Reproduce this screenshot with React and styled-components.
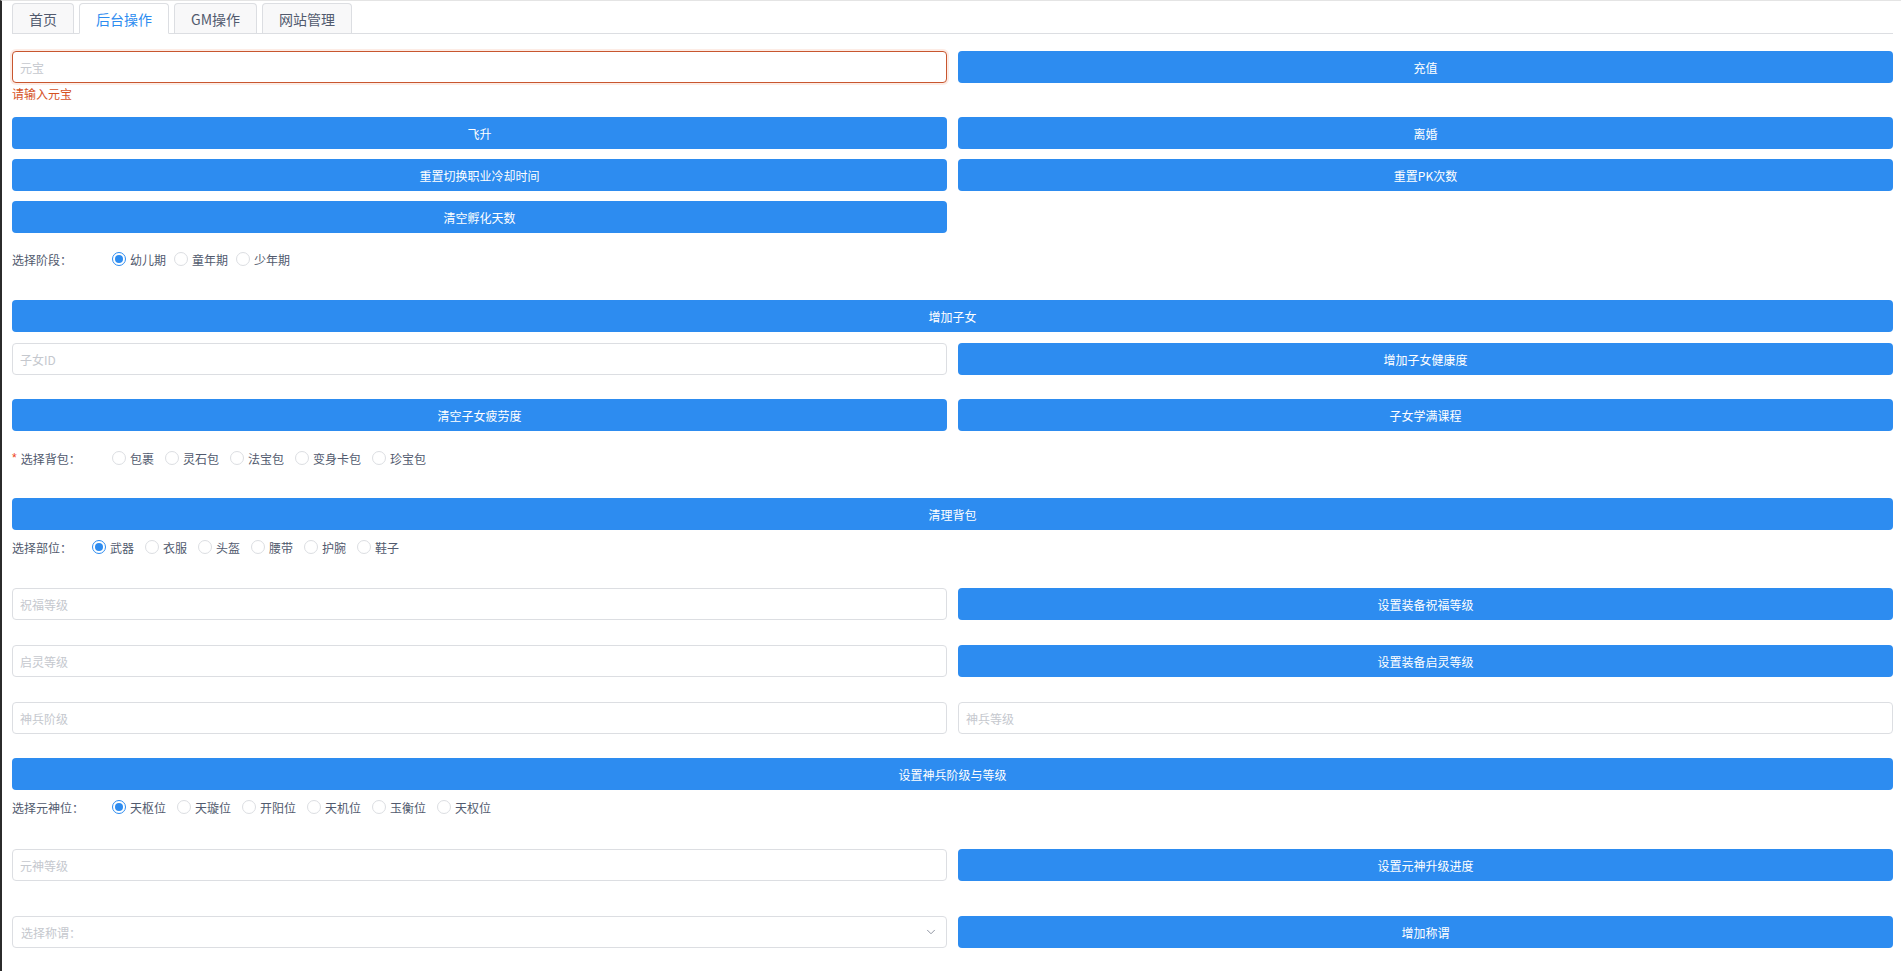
import React from 'react';
import styled, { createGlobalStyle } from 'styled-components';
import { ChevronDown } from 'lucide-react';

const Global = createGlobalStyle`
  html, body { margin: 0; padding: 0; background: #fff; }
  body {
    font-family: "Noto Sans CJK SC", "Noto Sans", "Liberation Sans", sans-serif;
    color: #515a6e;
  }
  * { box-sizing: border-box; }
`;

const Page = styled.div`
  min-height: 971px;
  border-left: 2px solid #2b2b2b;
  border-top: 1px solid #e4e4e4;
  padding: 2px 8px 0 10px;
`;

const TabBar = styled.div`
  display: flex;
  align-items: flex-end;
  gap: 5px;
  height: 31px;
  border-bottom: 1px solid #dcdee2;
`;

const Tab = styled.div`
  height: ${p => (p.$active ? '31px' : '30px')};
  margin-bottom: ${p => (p.$active ? '-1px' : '0')};
  padding: 0 16px;
  display: flex;
  align-items: center;
  font-size: 14px;
  color: ${p => (p.$active ? '#2d8cf0' : '#515a6e')};
  background: ${p => (p.$active ? '#fff' : '#f8f8f9')};
  border: 1px solid #dcdee2;
  border-bottom: ${p => (p.$active ? '1px solid #fff' : 'none')};
  border-radius: 4px 4px 0 0;
`;

const Row = styled.div`
  display: grid;
  grid-template-columns: ${p => (p.$full ? '1fr' : '1fr 1fr')};
  column-gap: 11px;
  align-items: start;
  margin-top: ${p => p.$mt}px;
`;

const Field = styled.div`
  display: flex;
  flex-direction: column;
`;

const Input = styled.input`
  height: 32px;
  width: 100%;
  border: 1px solid ${p => (p.$error ? '#c8562f' : '#dcdee2')};
  box-shadow: ${p => (p.$error ? '0 0 0 2px rgba(237, 100, 40, 0.12)' : 'none')};
  border-radius: 4px;
  padding: 0 7px;
  font-family: inherit;
  font-size: 12px;
  color: #515a6e;
  outline: none;
  background: #fff;
  &::placeholder { color: #c5c8ce; }
`;

const ErrorTip = styled.div`
  margin-top: 3px;
  font-size: 12px;
  line-height: 16px;
  color: #d5521f;
`;

const Button = styled.button`
  height: 32px;
  width: 100%;
  border: none;
  border-radius: 4px;
  background: #2d8cf0;
  color: #fff;
  font-family: inherit;
  font-size: 12px;
  cursor: pointer;
`;

const SelectBox = styled.div`
  height: 32px;
  border: 1px solid #dcdee2;
  border-radius: 4px;
  padding: 0 8px 0 8px;
  display: flex;
  align-items: center;
  justify-content: space-between;
  font-size: 12px;
  color: #c5c8ce;
  background: #fff;
`;

const RadioLine = styled.div`
  display: flex;
  align-items: center;
  height: 32px;
  margin-top: ${p => p.$mt}px;
  font-size: 12px;
`;

const RadioLabel = styled.div`
  width: ${p => p.$w}px;
  flex: none;
  color: #515a6e;
  display: flex;
  align-items: center;
`;

const Star = styled.span`
  color: #ed4014;
  margin-right: 4px;
  font-family: "Liberation Sans", sans-serif;
`;

const RadioItem = styled.label`
  display: flex;
  align-items: center;
  margin-right: ${p => p.$gap}px;
  color: #515a6e;
  cursor: pointer;
`;

const Circle = styled.span`
  width: 14px;
  height: 14px;
  border-radius: 50%;
  border: 1px solid ${p => (p.$checked ? '#2d8cf0' : '#dcdee2')};
  margin-right: 4px;
  display: flex;
  align-items: center;
  justify-content: center;
  background: #fff;
  &::after {
    content: '';
    width: 8px;
    height: 8px;
    border-radius: 50%;
    background: ${p => (p.$checked ? '#2d8cf0' : 'transparent')};
  }
`;

function RadioGroup({ label, width, required, options, mt, gap = 11 }) {
  return (
    <RadioLine $mt={mt}>
      <RadioLabel $w={width}>
        {required && <Star>*</Star>}
        {label}
      </RadioLabel>
      {options.map((o, i) => (
        <RadioItem key={o} $gap={gap}>
          <Circle $checked={i === 0 && !required} />
          {o}
        </RadioItem>
      ))}
    </RadioLine>
  );
}

export default function App() {
  return (
    <>
      <Global />
      <Page>
        <TabBar>
          <Tab>首页</Tab>
          <Tab $active>后台操作</Tab>
          <Tab>GM操作</Tab>
          <Tab>网站管理</Tab>
        </TabBar>

        <Row $mt={17}>
          <Field>
            <Input $error placeholder="元宝" />
            <ErrorTip>请输入元宝</ErrorTip>
          </Field>
          <Button>充值</Button>
        </Row>
        <Row $mt={15}>
          <Button>飞升</Button>
          <Button>离婚</Button>
        </Row>
        <Row $mt={10}>
          <Button>重置切换职业冷却时间</Button>
          <Button>重置PK次数</Button>
        </Row>
        <Row $mt={10}>
          <Button>清空孵化天数</Button>
          <div />
        </Row>

        <RadioGroup mt={10} gap={8} label="选择阶段：" width={100} options={['幼儿期', '童年期', '少年期']} />

        <Row $full $mt={25}>
          <Button>增加子女</Button>
        </Row>
        <Row $mt={11}>
          <Input placeholder="子女ID" />
          <Button>增加子女健康度</Button>
        </Row>
        <Row $mt={24}>
          <Button>清空子女疲劳度</Button>
          <Button>子女学满课程</Button>
        </Row>

        <RadioGroup mt={11} required label="选择背包：" width={100} options={['包裹', '灵石包', '法宝包', '变身卡包', '珍宝包']} />

        <Row $full $mt={24}>
          <Button>清理背包</Button>
        </Row>

        <RadioGroup mt={1} label="选择部位：" width={80} options={['武器', '衣服', '头盔', '腰带', '护腕', '鞋子']} />

        <Row $mt={25}>
          <Input placeholder="祝福等级" />
          <Button>设置装备祝福等级</Button>
        </Row>
        <Row $mt={25}>
          <Input placeholder="启灵等级" />
          <Button>设置装备启灵等级</Button>
        </Row>
        <Row $mt={25}>
          <Input placeholder="神兵阶级" />
          <Input placeholder="神兵等级" />
        </Row>
        <Row $full $mt={24}>
          <Button>设置神兵阶级与等级</Button>
        </Row>

        <RadioGroup mt={1} label="选择元神位：" width={100} options={['天枢位', '天璇位', '开阳位', '天机位', '玉衡位', '天权位']} />

        <Row $mt={26}>
          <Input placeholder="元神等级" />
          <Button>设置元神升级进度</Button>
        </Row>
        <Row $mt={35}>
          <SelectBox>
            <span>选择称谓：</span>
            <ChevronDown size={14} color="#808695" strokeWidth={1.5} />
          </SelectBox>
          <Button>增加称谓</Button>
        </Row>
      </Page>
    </>
  );
}
